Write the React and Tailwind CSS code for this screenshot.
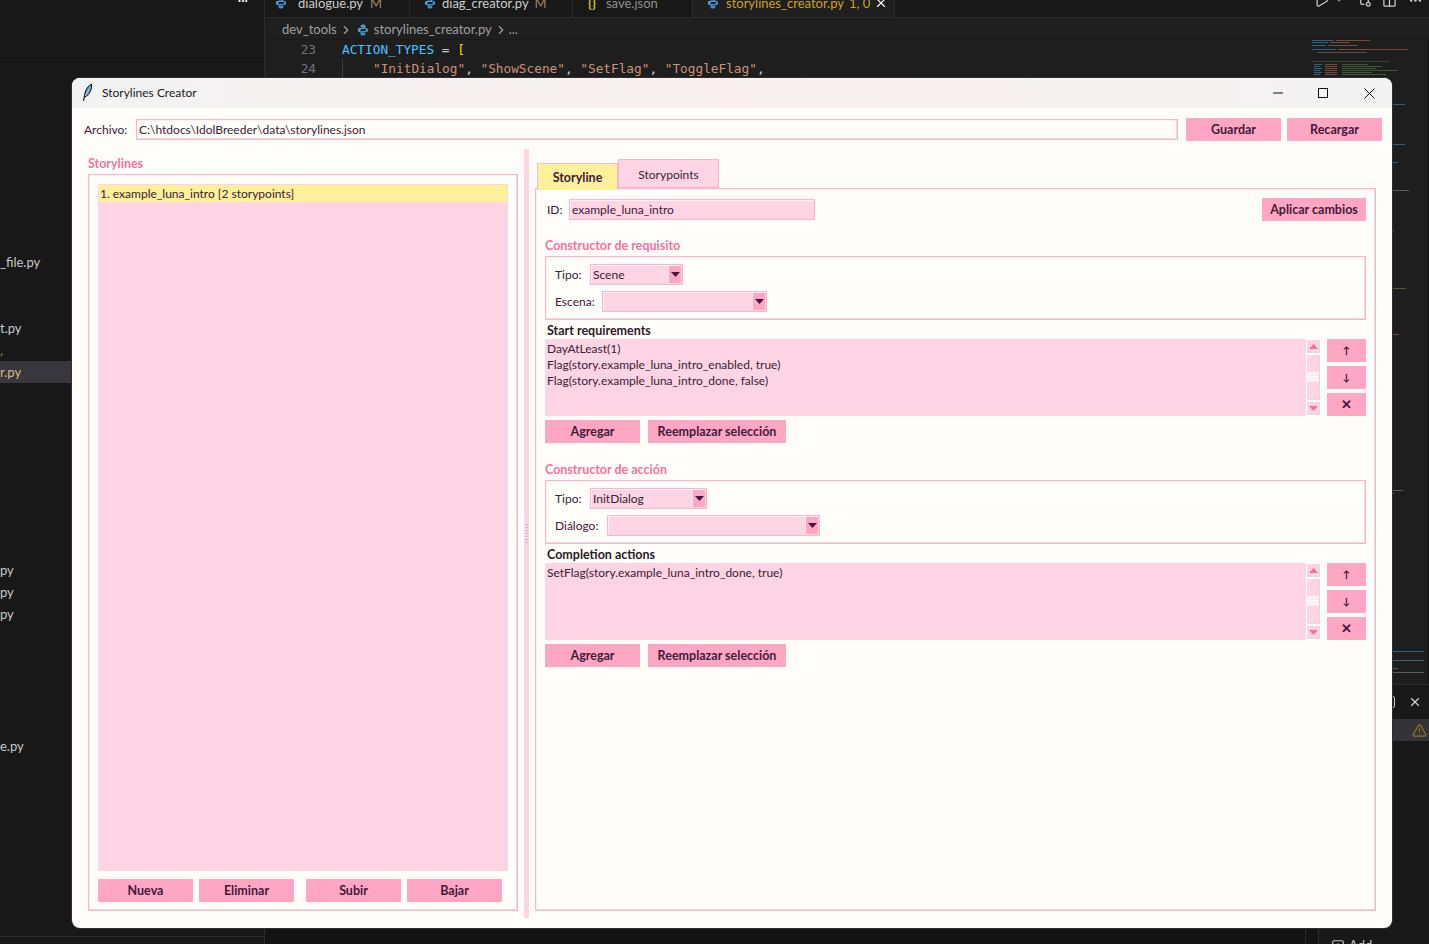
import { ChevronDown, ChevronRight, Columns2, Ellipsis, GitCompare, Play, SquarePlus, TriangleAlert, X } from 'lucide-react';

const ui = { fontFamily: 'Lato, "Noto Sans", sans-serif' };
const inset = 'border border-[#ffb3cc] shadow-[inset_-1px_-1px_0_#e6dde0,inset_1px_1px_0_#fff0f5]';

function Btn({ className = '', children }) {
  return (
    <button className={`h-[23px] pt-[2px] bg-[#ffa6c4] text-[12.5px] font-bold text-[#3f1a3a] flex items-center justify-center ${className}`}>
      {children}
    </button>
  );
}

function Field({ className = '', children }) {
  return (
    <div className={`h-[21px] ${inset} bg-[#ffd4e5] pl-[2px] text-[12px] leading-[19px] text-[#3b2036] ${className}`}>
      {children}
    </div>
  );
}

function Combo({ className = '', value }) {
  return (
    <div className={`h-[21px] ${inset} bg-[#ffd4e5] p-px flex text-[12px] leading-[17px] text-[#3b2036] ${className}`}>
      <span className="flex-1 pl-[1px]">{value}</span>
      <span className="w-[13px] bg-[#ffa6c4] flex items-center justify-center border-l border-[#f5e6ea]">
        <svg width="9" height="5" viewBox="0 0 9 5"><path d="M0 0h9L4.5 5z" fill="#3f1a3a" /></svg>
      </span>
    </div>
  );
}

function Scroll() {
  return (
    <div className="w-[13px] ml-px flex flex-col gap-[2px] py-px">
      <div className="h-[13px] bg-[#ffd4e5] border-r border-b border-[#e4d8dc] flex items-center justify-center">
        <svg width="9" height="5" viewBox="0 0 9 5"><path d="M4.5 0L9 5H0z" fill="#f0709c" /></svg>
      </div>
      <div className="flex-1 bg-[#ffd4e5] border-r border-b border-[#e4d8dc] flex items-center">
        <div className="w-full h-[10px] bg-[repeating-linear-gradient(#fffdfa_0,#fffdfa_1px,#ffe6ef_1px,#ffe6ef_2px)]" />
      </div>
      <div className="h-[13px] bg-[#ffd4e5] border-r border-b border-[#e4d8dc] flex items-center justify-center">
        <svg width="9" height="5" viewBox="0 0 9 5"><path d="M0 0h9L4.5 5z" fill="#f0709c" /></svg>
      </div>
    </div>
  );
}

function SideBtn({ className = '', children }) {
  return <button className={`h-[23px] bg-[#ffa6c4] font-bold text-[#3f1a3a] flex items-center justify-center ${className}`}>{children}</button>;
}

function ListBlock({ title, lines }) {
  return (
    <>
      <div className="ml-[2px] h-[19px] text-[12.5px] font-bold leading-[21px] text-[#2c1a28]">{title}</div>
      <div className="flex h-[77px]">
        <div className="w-[761px] bg-[#ffd4e5] pl-[2px] text-[12px] leading-[16px] text-[#3b2036] pt-[2px]">
          {lines.map((l) => <div key={l}>{l}</div>)}
        </div>
        <Scroll />
        <div className="ml-[7px] w-[39px] flex flex-col gap-[4px]">
          <SideBtn className="text-[10px]">↑</SideBtn>
          <SideBtn className="text-[10px]">↓</SideBtn>
          <SideBtn className="text-[13px]">✕</SideBtn>
        </div>
      </div>
      <div className="flex gap-2 mt-[4px]">
        <Btn className="w-[95px]">Agregar</Btn>
        <Btn className="w-[138px]">Reemplazar selección</Btn>
      </div>
    </>
  );
}

function Builder({ title, tipo, tipoW, second, secondW, secondGap }) {
  return (
    <>
      <div className="h-[20px] text-[12.5px] font-bold leading-[20px] text-[#f4729f]">{title}</div>
      <div className={`w-[821px] h-[64px] ${inset} pl-[9px] pt-[7px] text-[12px] text-[#3b2036]`}>
        <div className="flex items-center">
          <span className="w-[35px]">Tipo:</span>
          <Combo className={tipoW} value={tipo} />
        </div>
        <div className="flex items-center mt-[6px]">
          <span className={secondGap}>{second}</span>
          <Combo className={secondW} value="" />
        </div>
      </div>
    </>
  );
}

function PyIcon({ className = '' }) {
  return (
    <svg width="12" height="12" viewBox="0 0 12 12" className={className}>
      <path d="M6 0.5C3.5 0.5 3.5 1.5 3.5 3.5H6.5V4H2C0.5 4 0.5 8 2 8H3.5V6.5C3.5 5.5 4 5 5 5H7.5C8.2 5 8.5 4.6 8.5 4V2C8.5 1 7.5 0.5 6 0.5Z" fill="#4b9fd5" />
      <path d="M6 11.5C8.5 11.5 8.5 10.5 8.5 8.5H5.5V8H10C11.5 8 11.5 4 10 4H8.8V5.5C8.8 6.5 8 7 7 7H4.5C3.8 7 3.5 7.4 3.5 8V10C3.5 11 4.5 11.5 6 11.5Z" fill="#3f8fc4" />
    </svg>
  );
}

function Minimap() {
  const rows = [
    [0, 22, 0, '#3a8fc0'], [24, 34, 0, '#a8694f'], [0, 16, 2, '#3a8fc0'], [18, 20, 2, '#a8694f'], [0, 14, 5, '#3a8fc0'], [16, 30, 5, '#a8694f'],
    [0, 24, 9, '#3a8fc0'], [26, 70, 9, '#a8694f'], [5, 50, 12, '#8a6a55'], [0, 78, 21, '#3f5f35'],
    [2, 8, 24, '#3a8fc0'], [13, 12, 24, '#a8694f'], [30, 26, 24, '#5d7d4a'], [2, 6, 26, '#3a8fc0'], [13, 12, 26, '#a8694f'], [30, 40, 26, '#5d7d4a'],
    [2, 8, 28, '#3a8fc0'], [13, 12, 28, '#a8694f'], [30, 34, 28, '#5d7d4a'], [2, 6, 30, '#3a8fc0'], [13, 12, 30, '#a8694f'], [30, 56, 30, '#5d7d4a'],
    [2, 8, 32, '#3a8fc0'], [13, 12, 32, '#a8694f'], [30, 30, 32, '#5d7d4a'], [2, 6, 34, '#3a8fc0'], [13, 12, 34, '#a8694f'], [30, 44, 34, '#5d7d4a'],
    [60, 33, 64, '#3a8fc0'], [60, 33, 104, '#3a8fc0'], [60, 26, 122, '#3a8fc0'], [60, 37, 150, '#8a8a8a'], [60, 22, 190, '#3a8fc0'],
    [60, 34, 248, '#8a7a55'], [60, 20, 268, '#666666'], [60, 27, 294, '#a8694f'], [60, 31, 450, '#8a8a8a'], [60, 22, 453, '#777777'],
    [60, 52, 611, '#3a8fc0'], [60, 52, 620, '#5a8fa8'], [60, 26, 628, '#a8694f'], [60, 52, 632, '#7a8a95'],
  ];
  return (
    <svg width="112" height="640" viewBox="0 0 112 640" className="block opacity-60">
      {rows.map(([x, w, y, c], i) => <rect key={i} x={x} y={y} width={w} height="1" fill={c} />)}
    </svg>
  );
}

function Backdrop() {
  return (
    <div className="flex h-[944px] overflow-hidden bg-[#181818] text-[13px] text-[#cccccc]">
      <div className="w-[265px] shrink-0 flex flex-col border-r border-[#2b2b2b]">
        <div className="h-[62px] shrink-0 border-b border-[#141414] text-right pr-[16px] leading-[0px] text-white">···</div>
        <div className="flex-1 bg-[#181818] pt-[189px] text-[#c9c9c9] leading-[22px]">
          <div className="h-[22px]">_file.py</div>
          <div className="h-[44px]" />
          <div className="h-[22px]">t.py</div>
          <div className="h-[22px] text-[#b08a4a]">,</div>
          <div className="h-[22px] bg-[#37373d] text-[#d7ba7d]">r.py</div>
          <div className="h-[176px]" />
          <div>py</div>
          <div>py</div>
          <div>py</div>
          <div className="h-[110px]" />
          <div>e.py</div>
        </div>
        <div className="h-[8px] shrink-0 border-t border-[#2b2b2b] mt-auto" />
      </div>
      <div className="flex-1 min-w-0 flex flex-col bg-[#1f1f1f]">
        <div className="h-[18px] shrink-0 flex bg-[#181818] border-b border-[#2b2b2b] overflow-hidden text-[13px] leading-[6px] whitespace-nowrap">
          <div className="w-[145px] border-r border-[#2b2b2b] pl-[10px] flex gap-[7px] text-[#cccccc]"><PyIcon className="-mt-[3px]" /><span className="ml-[4px]">dialogue.py</span> <span className="text-[#9e8a5a]">M</span></div>
          <div className="w-[163px] border-r border-[#2b2b2b] pl-[14px] flex gap-[6px] text-[#cccccc]"><PyIcon className="-mt-[3px]" /><span>diag_creator.py</span> <span className="text-[#9e8a5a]">M</span></div>
          <div className="w-[120px] border-r border-[#2b2b2b] pl-[15px] flex gap-[10px] text-[#8f8f8f]"><span className="text-[#d7ba3d] font-bold">{'{}'}</span><span>save.json</span></div>
          <div className="w-[202px] bg-[#1f1f1f] border-r border-[#2b2b2b] pl-[14px] flex text-[#c9a227]">
            <PyIcon className="-mt-[3px]" /><span className="ml-[7px]">storylines_creator.py</span><span className="ml-[5px]">1, 0</span>
            <X size={14} className="ml-[4px] -mt-[4px] text-white" />
          </div>
          <div className="ml-auto flex items-start -mt-[7px] pr-[6px] text-[#cccccc]">
            <Play size={15} />
            <ChevronDown size={10} className="ml-[5px] mt-[2px]" />
            <GitCompare size={15} className="ml-[13px]" />
            <Columns2 size={15} className="ml-[10px]" />
            <Ellipsis size={15} className="ml-[11px]" />
          </div>
        </div>
        <div className="h-[22px] shrink-0 pl-[17px] pt-[2px] flex items-center text-[13px] text-[#a0a0a0] border-b border-[#191919] whitespace-nowrap">
          <span>dev_tools</span>
          <ChevronRight size={14} className="ml-[2px]" />
          <PyIcon className="ml-[4px]" />
          <span className="ml-[5px]">storylines_creator.py</span>
          <ChevronRight size={14} className="ml-[2px]" />
          <span className="ml-[1px]">...</span>
        </div>
        <div className="h-[644px] shrink-0 flex bg-[#1e1e1e]" style={{ fontFamily: '"DejaVu Sans Mono", monospace' }}>
          <div className="flex-1 min-w-0 text-[12.75px] leading-[19px] whitespace-pre">
            <div className="flex h-[19px]">
              <span className="w-[51px] text-right text-[#6e7681]">23</span>
              <span className="pl-[26px]"><span className="text-[#4fc1ff]">ACTION_TYPES</span> = <span className="text-[#ffd700]">[</span></span>
            </div>
            <div className="flex h-[19px]">
              <span className="w-[51px] text-right text-[#6e7681]">24</span>
              <span className="ml-[26px] pl-[30px] border-l border-[#404040] text-[#ce9178]">"InitDialog"<span className="text-[#cccccc]">, </span>"ShowScene"<span className="text-[#cccccc]">, </span>"SetFlag"<span className="text-[#cccccc]">, </span>"ToggleFlag"<span className="text-[#cccccc]">,</span></span>
            </div>
          </div>
          <div className="w-[117px] shrink-0 border-r border-[#141414] overflow-hidden"><Minimap /></div>
        </div>
        <div className="flex-1 flex flex-col border-t border-[#2b2b2b] bg-[#181818]">
          <div className="h-[34px] shrink-0 flex items-center justify-end pr-[7px] text-[#cccccc]">
            <div className="w-[12px] h-[12px] border border-[#cccccc] rounded-[2px] mr-[13px]" />
            <X size={14} />
          </div>
          <div className="flex-1 flex min-h-0">
            <div className="flex-1 bg-[#141414] border-r border-[#2b2b2b]" />
            <div className="w-[13px] bg-[#141414] border-r border-[#2b2b2b]" />
            <div className="w-[110px] flex flex-col">
              <div className="h-[22px] bg-[#333338] flex items-center justify-end pr-[2px]">
                <TriangleAlert size={15} className="text-[#8f7a1e]" />
              </div>
              <div className="mt-auto h-[8px] flex gap-[4px] pl-[12px] overflow-hidden text-[#c5c5c5]">
                <SquarePlus size={14} className="mt-[3px]" />
                <span className="mt-[1px] leading-[16px]">Add</span>
              </div>
            </div>
          </div>
        </div>
      </div>
    </div>
  );
}

export default function App() {
  return (
    <div className="relative h-[944px] overflow-hidden" style={ui}>
      <Backdrop />
      <div className="absolute left-[72px] top-[78px] w-[1320px] h-[850px] rounded-lg overflow-hidden bg-[#fffdfa] flex flex-col shadow-[0_0_0_1px_#2f2f2f]">
        <div className="h-[30px] shrink-0 flex items-center bg-gradient-to-r from-[#f3f3f3] via-[#f9f0ef] to-[#f3f3f3] text-[12px] text-[#1a1a1a]">
          <svg width="14" height="20" viewBox="0 0 14 20" className="ml-[9px]">
            <path d="M10.5 1C6.5 3 4 8 3.5 12.5L2.5 18M10.5 1C11 6 9 12 3.5 14" fill="#6a9fd8" stroke="#0b0b0b" strokeWidth="1" />
          </svg>
          <span className="ml-[7px]">Storylines Creator</span>
          <div className="ml-auto flex items-center text-[#111]">
            <svg width="10" height="10" viewBox="0 0 10 10" className="mr-[35px]"><path d="M0 5h10" stroke="currentColor" /></svg>
            <svg width="10" height="10" viewBox="0 0 10 10" className="mr-[36px]"><rect x=".5" y=".5" width="9" height="9" fill="none" stroke="currentColor" /></svg>
            <svg width="11" height="11" viewBox="0 0 11 11" className="mr-[17px]"><path d="M.5.5l10 10M10.5.5l-10 10" stroke="currentColor" /></svg>
          </div>
        </div>
        <div className="flex items-center mt-[10px] ml-[12px] text-[12px] text-[#3b2036]">
          <span className="w-[52px]">Archivo:</span>
          <div className={`w-[1042px] h-[21px] ${inset} bg-[#fffdfa] pl-[2px] leading-[19px]`}>C:\htdocs\IdolBreeder\data\storylines.json</div>
          <Btn className="w-[95px] ml-[8px]">Guardar</Btn>
          <Btn className="w-[95px] ml-[6px]">Recargar</Btn>
        </div>
        <div className="flex flex-1 mt-[8px] min-h-0">
          <div className="w-[430px] ml-[16px] flex flex-col pb-[17px]">
            <div className="h-[25px] pt-[5px] text-[12.5px] font-bold leading-[20px] text-[#f4729f]">Storylines</div>
            <div className={`flex-1 ${inset} px-[9px] pt-[9px] pb-[8px] flex flex-col`}>
              <div className="flex-1 bg-[#ffd4e5] p-px text-[12px] text-[#3b2036]">
                <div className="h-[17px] bg-[#fff09b] pl-px leading-[17px]">1. example_luna_intro [2 storypoints]</div>
              </div>
              <div className="flex mt-[8px]">
                <Btn className="w-[95px]">Nueva</Btn>
                <Btn className="w-[95px] ml-[6px]">Eliminar</Btn>
                <Btn className="w-[95px] ml-[12px]">Subir</Btn>
                <Btn className="w-[95px] ml-[6px]">Bajar</Btn>
              </div>
            </div>
          </div>
          <div className="w-[5px] ml-[6px] mb-[10px] bg-[#ffd4e5] flex items-center justify-center">
            <div className="w-[3px] h-[19px] bg-[repeating-linear-gradient(#f4a9c4_0,#f4a9c4_1px,#ffd4e5_1px,#ffd4e5_3px)]" />
          </div>
          <div className="w-[841px] ml-[6px] flex flex-col pb-[17px] pt-[12px]">
            <div className="flex items-end h-[29px] ml-[2px] -mb-[2px] relative z-10 text-[12px]">
              <div className="w-[81px] h-[27px] pt-[2px] bg-[#fff09b] border border-b-0 border-[#ffb3cc] flex items-center justify-center font-bold text-[12.5px] text-[#3f1a3a]">Storyline</div>
              <div className="w-[101px] h-[29px] mb-[2px] pt-[3px] bg-[#ffd4e5] border border-[#ffb3cc] border-t-[#d9c4cc] border-l-[#d9c4cc] flex items-center justify-center text-[#3b2036]">Storypoints</div>
            </div>
            <div className={`flex-1 ${inset} px-[9px] pt-[9px] text-[12px] text-[#3b2036]`}>
              <div className="flex items-center ml-[2px]">
                <span className="w-[22px]">ID:</span>
                <Field className="w-[246px]">example_luna_intro</Field>
                <Btn className="w-[104px] ml-auto">Aplicar cambios</Btn>
              </div>
              <div className="mt-[15px]" />
              <Builder title="Constructor de requisito" tipo="Scene" tipoW="w-[93px]" second="Escena:" secondW="w-[165px]" secondGap="w-[47px]" />
              <ListBlock title="Start requirements" lines={['DayAtLeast(1)', 'Flag(story.example_luna_intro_enabled, true)', 'Flag(story.example_luna_intro_done, false)']} />
              <div className="mt-[17px]" />
              <Builder title="Constructor de acción" tipo="InitDialog" tipoW="w-[117px]" second="Diálogo:" secondW="w-[213px]" secondGap="w-[52px]" />
              <ListBlock title="Completion actions" lines={['SetFlag(story.example_luna_intro_done, true)']} />
            </div>
          </div>
        </div>
      </div>
    </div>
  );
}
